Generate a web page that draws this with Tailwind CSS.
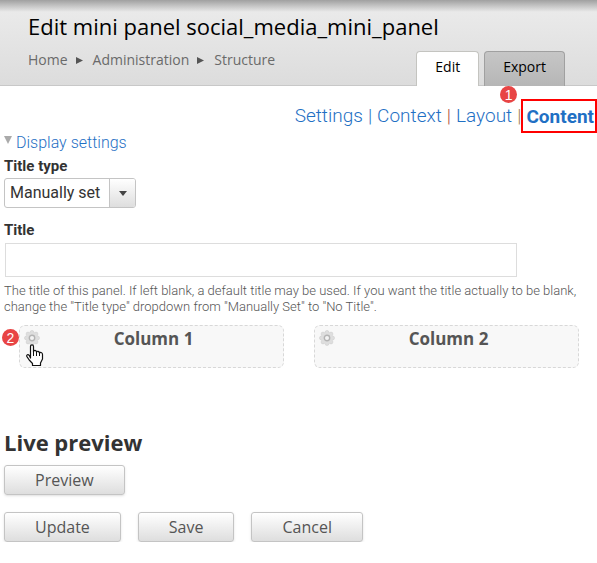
<!DOCTYPE html>
<html lang="en">
<head>
    <meta charset="UTF-8">
    <meta name="viewport" content="width=device-width, initial-scale=1.0">
    <script src="https://cdn.jsdelivr.net/npm/@tailwindcss/browser@4"></script>
    <title>Edit mini panel</title>
</head>
<body class="bg-white font-['Open_Sans',sans-serif] text-[#333]">
    <!-- Header -->
    <header class="bg-linear-to-b from-[#ececec] to-[#dcdcdc]">
        <div class="h-3 bg-linear-to-b from-[#a0a0a0] to-[#ececec]/0"></div>
        <h1 class="pl-7 text-[22px] leading-7 text-black">Edit mini panel social_media_mini_panel</h1>
        <div class="flex items-start justify-between border-b border-[#c8c8c8] pl-7 pr-8 pt-[10px]">
            <nav aria-label="Breadcrumb" class="flex items-center text-sm leading-5 text-[#6a6a6a]">
                <a href="#">Home</a>
                <svg class="ml-2 mr-[10px] h-[7px] w-[7px] fill-[#555]" viewBox="0 0 7 7"><path d="M0 0L7 3.5L0 7Z"/></svg>
                <a href="#">Administration</a>
                <svg class="ml-2 mr-[10px] h-[7px] w-[7px] fill-[#555]" viewBox="0 0 7 7"><path d="M0 0L7 3.5L0 7Z"/></svg>
                <a href="#">Structure</a>
            </nav>
            <div class="-mb-px mt-px flex gap-[5px] text-sm leading-5 text-black">
                <a href="#" class="h-[35px] rounded-t border border-b-0 border-[#c4c4c0] bg-white px-[18px] pt-[5px]">Edit</a>
                <a href="#" class="h-[35px] rounded-t border border-b-0 border-[#a0a0a0] bg-linear-to-b from-[#c6c6c6] to-[#b6b6b6] px-[18px] pt-[5px]">Export</a>
            </div>
        </div>
    </header>

    <!-- Section links -->
    <nav aria-label="Panel sections" class="mt-[13px] flex items-center justify-end gap-[5px] font-['Roboto',sans-serif] text-[19px] leading-6 font-light text-[#1f70c4]">
        <a href="#">Settings</a>
        <span>|</span>
        <a href="#">Context</a>
        <span class="text-[#b0503c]">|</span>
        <a href="#" class="relative">Layout
            <span class="absolute -right-[5px] -top-[18px] flex size-[17px] items-center justify-center rounded-full bg-[#e84545] font-['Liberation_Sans',sans-serif] text-sm leading-4 font-normal text-white">1</span>
        </a>
        <span class="text-[#a08050]">|</span>
        <a href="#" class="-ml-[5px] border-2 border-[#f00] pt-[4px] pr-px pb-[2px] pl-[3px] font-bold">Content</a>
    </nav>

    <main class="px-1">
        <!-- Display settings -->
        <div class="flex font-['Roboto',sans-serif]">
            <svg class="mr-1 mt-[3px] h-2 w-2 fill-[#aaa]" viewBox="0 0 8 8"><path d="M0 0H8L4 8Z"/></svg>
            <a href="#" class="text-base leading-5 font-light text-[#1f70c4]">Display settings</a>
        </div>
        <div class="font-['Roboto',sans-serif]">
            <label for="title-type" class="mt-[3px] block text-[15px] leading-5 font-bold">Title type</label>
            <div class="relative mt-[2px] w-[132px]">
                <select id="title-type" class="h-[30px] w-full appearance-none rounded-[3px] border border-[#c4c4c4] bg-white pl-[5px] text-base leading-5">
                    <option>Manually set</option>
                    <option>No title</option>
                </select>
                <span class="pointer-events-none absolute inset-y-px right-px flex w-[26px] items-center justify-center rounded-r-[2px] border-l border-[#c4c4c4] bg-linear-to-b from-white to-[#dedede]">
                    <svg class="h-[5px] w-2 fill-[#444]" viewBox="0 0 8 5"><path d="M0 0H8L4 5Z"/></svg>
                </span>
            </div>

            <label for="title" class="mt-3 block text-[15px] leading-5 font-bold">Title</label>
            <input id="title" type="text" class="ml-px mt-[3px] block h-[34px] w-[512px] max-w-full border border-[#ddd] px-2">
            <p class="mt-[6px] text-[13px] leading-4 font-light text-[#555]">The title of this panel. If left blank, a default title may be used. If you want the title actually to be blank, change the "Title type" dropdown from "Manually Set" to "No Title".</p>
        </div>

        <!-- Columns -->
        <div class="mt-[10px] grid grid-cols-2 gap-[30px] pl-[15px] pr-[14px]">
            <section class="relative h-[43px] rounded-md border border-dashed border-[#d8d8d8] bg-[#f8f8f8]">
                <h2 class="pl-1 pt-px text-center text-[17px] leading-6 font-bold text-[#555]">Column 1</h2>
                <button type="button" aria-label="Column 1 settings" class="absolute left-[4px] top-[4px]">
                    <svg class="size-4" viewBox="0 0 16 16">
                        <g fill="#dedede" stroke="#cfcfcf" stroke-width=".6">
                            <circle cx="8" cy="2.4" r="1.9"/><circle cx="12" cy="4" r="1.9"/><circle cx="13.6" cy="8" r="1.9"/><circle cx="12" cy="12" r="1.9"/>
                            <circle cx="8" cy="13.6" r="1.9"/><circle cx="4" cy="12" r="1.9"/><circle cx="2.4" cy="8" r="1.9"/><circle cx="4" cy="4" r="1.9"/>
                        </g>
                        <circle cx="8" cy="8" r="5.6" fill="#dedede"/>
                        <circle cx="8" cy="8" r="2.7" fill="#f3f3f3" stroke="#b4b4b4" stroke-width="1.4"/>
                    </svg>
                </button>
                <span class="absolute -left-[18px] top-[3px] flex size-[17px] items-center justify-center rounded-full bg-[#e84545] font-['Liberation_Sans',sans-serif] text-sm leading-4 text-white">2</span>
                <!-- Hand pointer -->
                <svg class="pointer-events-none absolute left-[6px] top-[18px] h-[23px] w-[18px]" viewBox="0 0 18 23">
                    <path d="M4.5 14V2.5C4.5 .2 7.5 .2 7.5 2.5V8C7.5 5.8 10.5 6 10.5 8.3C10.8 6.6 13.5 7 13.5 9.3C14 7.8 16.5 8.3 16.5 10.5V15L14.5 19V21.5H6.5V19.5L3.2 16L.8 12.3C.3 10.8 2 9.8 3.2 11.3Z" fill="#fff" stroke="#111" stroke-width="1.2" stroke-linejoin="round"/>
                    <path d="M7.5 7.5V12M10.5 8V12M13.5 9V12" fill="none" stroke="#111"/>
                </svg>
            </section>
            <section class="relative h-[43px] rounded-md border border-dashed border-[#d8d8d8] bg-[#f8f8f8]">
                <h2 class="pl-1 pt-px text-center text-[17px] leading-6 font-bold text-[#555]">Column 2</h2>
                <button type="button" aria-label="Column 2 settings" class="absolute left-[4px] top-[4px]">
                    <svg class="size-4" viewBox="0 0 16 16">
                        <g fill="#dedede" stroke="#cfcfcf" stroke-width=".6">
                            <circle cx="8" cy="2.4" r="1.9"/><circle cx="12" cy="4" r="1.9"/><circle cx="13.6" cy="8" r="1.9"/><circle cx="12" cy="12" r="1.9"/>
                            <circle cx="8" cy="13.6" r="1.9"/><circle cx="4" cy="12" r="1.9"/><circle cx="2.4" cy="8" r="1.9"/><circle cx="4" cy="4" r="1.9"/>
                        </g>
                        <circle cx="8" cy="8" r="5.6" fill="#dedede"/>
                        <circle cx="8" cy="8" r="2.7" fill="#f3f3f3" stroke="#b4b4b4" stroke-width="1.4"/>
                    </svg>
                </button>
            </section>
        </div>

        <!-- Live preview -->
        <h2 class="mt-[59px] text-[22px] leading-[30px] font-bold">Live preview</h2>
        <div class="mt-2 text-base leading-5 text-[#555]">
            <button type="button" class="h-[30px] rounded-[3px] border border-[#c4c4c4] bg-linear-to-b from-white to-[#dedede] px-[30px] shadow-sm">Preview</button>
        </div>
        <div class="mt-[17px] flex gap-[17px] text-base leading-5 text-[#555]">
            <button type="button" class="h-[30px] rounded-[3px] border border-[#c4c4c4] bg-linear-to-b from-white to-[#dedede] px-[30px] shadow-sm">Update</button>
            <button type="button" class="h-[30px] rounded-[3px] border border-[#c4c4c4] bg-linear-to-b from-white to-[#dedede] px-[30px] shadow-sm">Save</button>
            <button type="button" class="h-[30px] rounded-[3px] border border-[#c4c4c4] bg-linear-to-b from-white to-[#dedede] px-[30px] shadow-sm">Cancel</button>
        </div>
    </main>
</body>
</html>
